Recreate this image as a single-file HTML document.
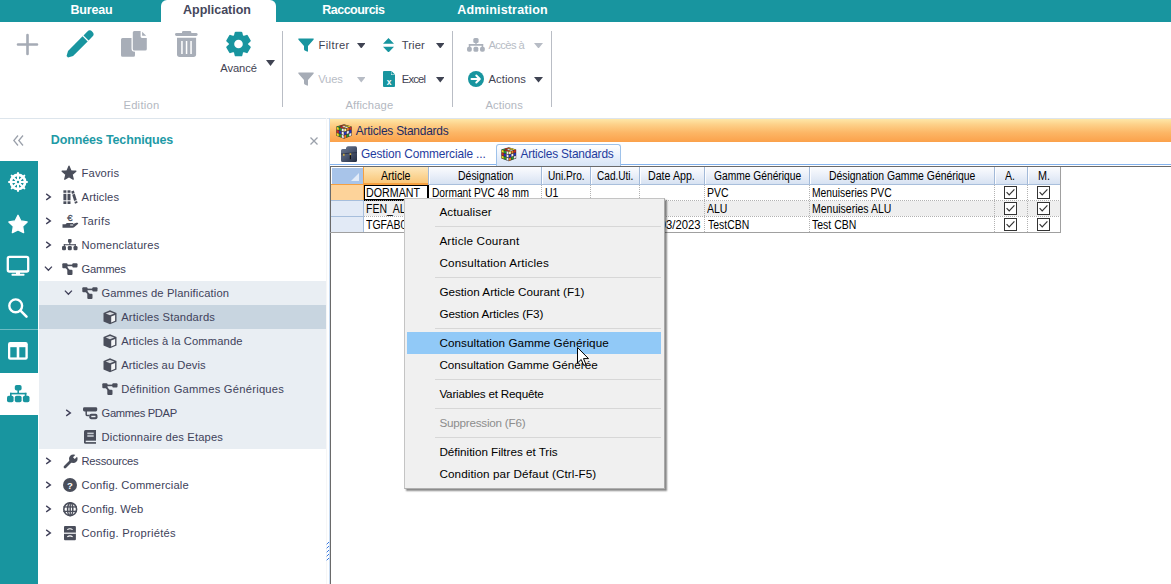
<!DOCTYPE html><html><head><meta charset="utf-8"><style>
html,body{margin:0;padding:0;width:1171px;height:584px;overflow:hidden;background:#fff;position:relative;font-family:"Liberation Sans", sans-serif}
</style></head><body>
<div style="position:absolute;left:0px;top:0px;width:1171px;height:22px;background:#18959f"></div>
<div style="position:absolute;left:161px;top:0px;width:115px;height:23px;background:#fff;border-radius:6px 6px 0 0"></div>
<div style="position:absolute;left:70.50px;top:0px;line-height:20px;font-size:12.5px;color:#fff;font-weight:bold;font-family:'Liberation Sans', sans-serif;white-space:nowrap;letter-spacing:-0.210px;">Bureau</div>
<div style="position:absolute;left:183.00px;top:0px;line-height:20px;font-size:12.5px;color:#45475c;font-weight:bold;font-family:'Liberation Sans', sans-serif;white-space:nowrap;letter-spacing:-0.005px;">Application</div>
<div style="position:absolute;left:322.30px;top:0px;line-height:20px;font-size:12.5px;color:#fff;font-weight:bold;font-family:'Liberation Sans', sans-serif;white-space:nowrap;letter-spacing:-0.522px;">Raccourcis</div>
<div style="position:absolute;left:457.30px;top:0px;line-height:20px;font-size:12.5px;color:#fff;font-weight:bold;font-family:'Liberation Sans', sans-serif;white-space:nowrap;letter-spacing:0.169px;">Administration</div>
<div style="position:absolute;left:0px;top:118px;width:1171px;height:1px;background:#dde5ec"></div>
<svg style="position:absolute;left:16px;top:33px" width="23" height="23" viewBox="0 0 23 23"><path d="M11.5 2 V21 M2 11.5 H21" stroke="#a5abb5" stroke-width="2.6" stroke-linecap="round" fill="none"/></svg>
<svg style="position:absolute;left:65.5px;top:29.5px" width="28" height="28" viewBox="0 0 28 28"><g transform="translate(1.3,26.7) rotate(-45)" fill="#18959f"><path d="M0 -1 Q0 0 0 1 L4.6 3.6 H25.2 V-3.6 H4.6 Z"/><path d="M26.5 -3.6 H32 Q35.4 -3.6 35.4 0 Q35.4 3.6 32 3.6 H26.5 Z"/></g></svg>
<svg style="position:absolute;left:120px;top:31px" width="28" height="26" viewBox="0 0 28 26"><g fill="#a8aeb8"><path d="M12.8 1.5 Q12.8 0 14.3 0 H20.6 V5.6 Q20.6 7 22 7 H26.8 V18 Q26.8 19.5 25.3 19.5 H14.3 Q12.8 19.5 12.8 18 Z"/><path d="M22.1 0.8 V4.7 H26.2 Z"/><path d="M1 8.4 Q1 6.9 2.5 6.9 H11.5 V17.5 Q11.5 20.8 14.8 20.8 H15 V24.3 Q15 25.8 13.5 25.8 H2.5 Q1 25.8 1 24.3 Z"/></g></svg>
<svg style="position:absolute;left:175px;top:31px" width="23" height="26" viewBox="0 0 23 26"><g fill="#a8aeb8"><rect x="7" y="0" width="9.3" height="3" rx="1.3"/><rect x="0" y="2" width="22.6" height="2.9" rx="1.45"/><path d="M2 6.8 H21.1 V23.3 Q21.1 25.9 18.5 25.9 H4.6 Q2 25.9 2 23.3 Z"/></g><g fill="#fff"><rect x="6.2" y="10" width="1.5" height="13"/><rect x="10.8" y="10" width="1.5" height="13"/><rect x="15.3" y="10" width="1.5" height="13"/></g></svg>
<svg style="position:absolute;left:226px;top:31px" width="25" height="26" viewBox="0 0 25 26"><path d="M8.91 5.18 L9.74 1.73 L15.26 1.73 L16.09 5.18 L17.48 5.99 L20.88 4.98 L23.64 9.75 L21.06 12.20 L21.06 13.80 L23.64 16.25 L20.88 21.02 L17.48 20.01 L16.09 20.82 L15.26 24.27 L9.74 24.27 L8.91 20.82 L7.52 20.01 L4.12 21.02 L1.36 16.25 L3.94 13.80 L3.94 12.20 L1.36 9.75 L4.12 4.98 L7.52 5.99 Z" fill="#18959f" stroke="#18959f" stroke-width="2.2" stroke-linejoin="round"/><circle cx="12.5" cy="13" r="4.3" fill="#fff"/></svg>
<div style="position:absolute;left:220.30px;top:58px;line-height:20px;font-size:11.2px;color:#3f4352;font-weight:normal;font-family:'Liberation Sans', sans-serif;white-space:nowrap;letter-spacing:-0.090px;">Avancé</div>
<svg style="position:absolute;left:265.5px;top:60px" width="9" height="6" viewBox="0 0 9 6"><path d="M0 0 H9 L4.5 6 Z" fill="#3f4352"/></svg>
<div style="position:absolute;left:282px;top:31px;width:1px;height:76px;background:#b9bdc5"></div>
<div style="position:absolute;left:123.40px;top:95px;line-height:20px;font-size:11.2px;color:#b3b8c1;font-weight:normal;font-family:'Liberation Sans', sans-serif;white-space:nowrap;letter-spacing:0.275px;">Edition</div>
<svg style="position:absolute;left:298px;top:38px" width="16" height="14" viewBox="0 0 16 14"><path d="M0.5 0.5 H15.5 Q16 1 15.5 1.8 L10 8 V13 Q10 14 9 13.6 L6.8 12.5 Q6 12 6 11 V8 L0.5 1.8 Q0 1 0.5 0.5 Z" fill="#18959f"/></svg>
<div style="position:absolute;left:318.50px;top:35px;line-height:20px;font-size:11.2px;color:#3f4352;font-weight:normal;font-family:'Liberation Sans', sans-serif;white-space:nowrap;letter-spacing:0.367px;">Filtrer</div>
<svg style="position:absolute;left:356.7px;top:42.7px" width="8.5" height="5.5" viewBox="0 0 8.5 5.5"><path d="M0 0 H8.5 L4.25 5.5 Z" fill="#3f4352"/></svg>
<svg style="position:absolute;left:383px;top:37.6px" width="11" height="14.5" viewBox="0 0 11 14.5"><path d="M5.5 0 L11 5.7 H0 Z M0 8.8 H11 L5.5 14.5 Z" fill="#18959f"/></svg>
<div style="position:absolute;left:401.70px;top:35px;line-height:20px;font-size:11.2px;color:#3f4352;font-weight:normal;font-family:'Liberation Sans', sans-serif;white-space:nowrap;letter-spacing:0.125px;">Trier</div>
<svg style="position:absolute;left:435.6px;top:42.7px" width="8.5" height="5.5" viewBox="0 0 8.5 5.5"><path d="M0 0 H8.5 L4.25 5.5 Z" fill="#3f4352"/></svg>
<svg style="position:absolute;left:298px;top:71.5px" width="16" height="14" viewBox="0 0 16 14"><path d="M0.5 0.5 H15.5 Q16 1 15.5 1.8 L10 8 V13 Q10 14 9 13.6 L6.8 12.5 Q6 12 6 11 V8 L0.5 1.8 Q0 1 0.5 0.5 Z" fill="#a6acb6"/></svg>
<div style="position:absolute;left:318.20px;top:69px;line-height:20px;font-size:11.2px;color:#b7bcc5;font-weight:normal;font-family:'Liberation Sans', sans-serif;white-space:nowrap;letter-spacing:-0.133px;">Vues</div>
<svg style="position:absolute;left:356.5px;top:77px" width="8.5" height="5.5" viewBox="0 0 8.5 5.5"><path d="M0 0 H8.5 L4.25 5.5 Z" fill="#b7bcc5"/></svg>
<svg style="position:absolute;left:383px;top:71px" width="12" height="16" viewBox="0 0 12 16"><path d="M1 0 H8 L12 4 V15 Q12 16 11 16 H1 Q0 16 0 15 V1 Q0 0 1 0 Z" fill="#18959f"/><path d="M8 0 V4 H12 Z" fill="#fff"/><path d="M8.4 0 L12 3.6 H8.4 Z" fill="#18959f"/><text x="6" y="14.2" font-size="8.5" font-family="Liberation Sans" font-weight="bold" fill="#fff" text-anchor="middle">x</text></svg>
<div style="position:absolute;left:401.70px;top:69px;line-height:20px;font-size:11.2px;color:#3f4352;font-weight:normal;font-family:'Liberation Sans', sans-serif;white-space:nowrap;letter-spacing:-0.750px;">Excel</div>
<svg style="position:absolute;left:435.6px;top:77px" width="8.5" height="5.5" viewBox="0 0 8.5 5.5"><path d="M0 0 H8.5 L4.25 5.5 Z" fill="#3f4352"/></svg>
<div style="position:absolute;left:452px;top:31px;width:1px;height:76px;background:#b9bdc5"></div>
<div style="position:absolute;left:345.50px;top:95px;line-height:20px;font-size:11.2px;color:#b3b8c1;font-weight:normal;font-family:'Liberation Sans', sans-serif;white-space:nowrap;letter-spacing:0.150px;">Affichage</div>
<svg style="position:absolute;left:467px;top:38px" width="18" height="14" viewBox="0 0 18 14"><g fill="#abb1bb"><rect x="6.3" y="0" width="5.3" height="4.9" rx="1.5"/><rect x="8.3" y="4" width="1.4" height="3"/><rect x="1.8" y="6" width="14.4" height="1.7" rx="0.8"/><rect x="1.8" y="6" width="1.5" height="3"/><rect x="14.7" y="6" width="1.5" height="3"/><rect x="0" y="8.8" width="4.8" height="4.9" rx="1.8"/><rect x="6.5" y="8.8" width="4.8" height="4.9" rx="1.5"/><rect x="13" y="8.8" width="4.8" height="4.9" rx="1.8"/></g></svg>
<div style="position:absolute;left:488.50px;top:35px;line-height:20px;font-size:11.2px;color:#b7bcc5;font-weight:normal;font-family:'Liberation Sans', sans-serif;white-space:nowrap;letter-spacing:-0.592px;">Accès à</div>
<svg style="position:absolute;left:534px;top:42.5px" width="9" height="5.5" viewBox="0 0 9 5.5"><path d="M0 0 H9 L4.5 5.5 Z" fill="#b7bcc5"/></svg>
<svg style="position:absolute;left:467.8px;top:71px" width="16" height="16" viewBox="0 0 16 16"><circle cx="8" cy="8" r="8" fill="#18959f"/><path d="M3.5 8 H11.5 M8.3 4.5 L11.8 8 L8.3 11.5" stroke="#fff" stroke-width="2" fill="none" stroke-linecap="round" stroke-linejoin="round"/></svg>
<div style="position:absolute;left:488.50px;top:69px;line-height:20px;font-size:11.2px;color:#3f4352;font-weight:normal;font-family:'Liberation Sans', sans-serif;white-space:nowrap;letter-spacing:0.108px;">Actions</div>
<svg style="position:absolute;left:534px;top:77px" width="9" height="5.5" viewBox="0 0 9 5.5"><path d="M0 0 H9 L4.5 5.5 Z" fill="#3f4352"/></svg>
<div style="position:absolute;left:551px;top:31px;width:1px;height:76px;background:#b9bdc5"></div>
<div style="position:absolute;left:485.40px;top:95px;line-height:20px;font-size:11.2px;color:#b3b8c1;font-weight:normal;font-family:'Liberation Sans', sans-serif;white-space:nowrap;letter-spacing:0.108px;">Actions</div>
<svg style="position:absolute;left:13px;top:135px" width="11" height="11" viewBox="0 0 11 11"><path d="M5 0.5 L0.8 5.5 L5 10.5 M10 0.5 L5.8 5.5 L10 10.5" stroke="#9ba1ab" stroke-width="1.3" fill="none"/></svg>
<div style="position:absolute;left:50.80px;top:130px;line-height:20px;font-size:12.5px;color:#1e9aa6;font-weight:bold;font-family:'Liberation Sans', sans-serif;white-space:nowrap;letter-spacing:-0.135px;">Données Techniques</div>
<svg style="position:absolute;left:310px;top:136.5px" width="8" height="8" viewBox="0 0 8 8"><path d="M0.5 0.5 L7.5 7.5 M7.5 0.5 L0.5 7.5" stroke="#9ba1ab" stroke-width="1.3"/></svg>
<div style="position:absolute;left:0px;top:161px;width:38px;height:423px;background:#18959f"></div>
<svg style="position:absolute;left:7.8px;top:171.7px" width="20" height="20" viewBox="0 0 20 20"><circle cx="10" cy="10" r="7.1" stroke="#fff" stroke-width="2.7" fill="none"/><line x1="11.50" y1="10.00" x2="19.00" y2="10.00" stroke="#fff" stroke-width="2" stroke-linecap="round"/><line x1="11.06" y1="11.06" x2="16.36" y2="16.36" stroke="#fff" stroke-width="2" stroke-linecap="round"/><line x1="10.00" y1="11.50" x2="10.00" y2="19.00" stroke="#fff" stroke-width="2" stroke-linecap="round"/><line x1="8.94" y1="11.06" x2="3.64" y2="16.36" stroke="#fff" stroke-width="2" stroke-linecap="round"/><line x1="8.50" y1="10.00" x2="1.00" y2="10.00" stroke="#fff" stroke-width="2" stroke-linecap="round"/><line x1="8.94" y1="8.94" x2="3.64" y2="3.64" stroke="#fff" stroke-width="2" stroke-linecap="round"/><line x1="10.00" y1="8.50" x2="10.00" y2="1.00" stroke="#fff" stroke-width="2" stroke-linecap="round"/><line x1="11.06" y1="8.94" x2="16.36" y2="3.64" stroke="#fff" stroke-width="2" stroke-linecap="round"/><circle cx="10" cy="10" r="2.9" fill="#fff"/><circle cx="10" cy="10" r="1.2" fill="#18959f"/></svg>
<svg style="position:absolute;left:7px;top:213px" width="22" height="22" viewBox="0 0 22 22"><polygon points="11.00,2.30 13.88,7.94 20.13,8.93 15.66,13.41 16.64,19.67 11.00,16.80 5.36,19.67 6.34,13.41 1.87,8.93 8.12,7.94" fill="#fff" stroke="#fff" stroke-width="1.3" stroke-linejoin="round"/></svg>
<svg style="position:absolute;left:6px;top:255px" width="24" height="22" viewBox="0 0 24 22"><rect x="1.8" y="1.9" width="20.4" height="14.6" rx="1.6" stroke="#fff" stroke-width="2.3" fill="none"/><rect x="10" y="16" width="4" height="3" fill="#fff"/><rect x="5.5" y="18.7" width="13" height="2" rx="0.6" fill="#fff"/></svg>
<svg style="position:absolute;left:7px;top:297px" width="22" height="22" viewBox="0 0 22 22"><circle cx="8.7" cy="8.8" r="6.4" stroke="#fff" stroke-width="2.4" fill="none"/><line x1="13.5" y1="13.6" x2="19.5" y2="19.6" stroke="#fff" stroke-width="2.6" stroke-linecap="round"/></svg>
<div style="position:absolute;left:0px;top:329px;width:38px;height:1px;background:#6cbcc3"></div>
<svg style="position:absolute;left:7.8px;top:341.7px" width="20" height="18" viewBox="0 0 20 18"><rect x="0" y="0" width="19.8" height="17.8" rx="2.2" fill="#fff"/><rect x="2.3" y="5.2" width="6.4" height="10.2" fill="#18959f"/><rect x="11.3" y="5.2" width="6.1" height="10.2" fill="#18959f"/></svg>
<div style="position:absolute;left:0px;top:373px;width:38px;height:42px;background:#fff"></div>
<svg style="position:absolute;left:6.5px;top:385px" width="23.00" height="18.00" viewBox="0 0 23 18"><g fill="#18959f"><rect x="7.8" y="0" width="6.8" height="5.6" rx="1.8"/><rect x="10.4" y="5" width="1.6" height="4"/><rect x="3" y="7.8" width="16.4" height="1.6"/><rect x="3" y="7.8" width="1.6" height="3.4"/><rect x="17.8" y="7.8" width="1.6" height="3.4"/><rect x="0" y="10.8" width="6.6" height="6.4" rx="1.8"/><rect x="7.8" y="10.8" width="6.8" height="6.4" rx="1.8"/><rect x="15.9" y="10.8" width="6.6" height="6.4" rx="1.8"/></g></svg>
<div style="position:absolute;left:326px;top:118px;width:1px;height:466px;background:#f6f6f6"></div>
<div style="position:absolute;left:39px;top:281px;width:287px;height:168px;background:#e9eef3"></div>
<div style="position:absolute;left:39px;top:305px;width:287px;height:24px;background:#c8d5e0"></div>
<svg style="position:absolute;left:61px;top:165px" width="16" height="16" viewBox="0 0 16 16"><polygon points="8.00,1.20 9.88,5.81 14.85,6.18 11.04,9.39 12.23,14.22 8.00,11.60 3.77,14.22 4.96,9.39 1.15,6.18 6.12,5.81" fill="#4a4e5b" stroke="#4a4e5b" stroke-width="1.3" stroke-linejoin="round"/></svg>
<div style="position:absolute;left:81.60px;top:163px;line-height:20px;font-size:11.2px;color:#40425a;font-weight:normal;font-family:'Liberation Sans', sans-serif;white-space:nowrap;letter-spacing:0.117px;">Favoris</div>
<svg style="position:absolute;left:44.8px;top:193.2px" width="7" height="8" viewBox="0 0 7 8"><path d="M1.2 0.9 L5.4 3.9 L1.2 6.9" stroke="#3f3f58" stroke-width="1.3" fill="none"/></svg>
<svg style="position:absolute;left:62.5px;top:189.5px" width="15" height="15" viewBox="0 0 15 15"><g fill="#4a4e5b"><rect x="0.4" y="0.3" width="3" height="13.7"/><rect x="4.5" y="0.3" width="3" height="13.7"/><path d="M8.2 1.6 L10.8 0.6 L14.6 12.8 L12 13.8 Z"/></g><g fill="#fff"><rect x="0" y="2.8" width="8" height="1"/><rect x="0" y="10.3" width="8" height="1"/><path d="M8.9 3.9 L11.6 2.9 L11.9 3.8 L9.2 4.8 Z"/><path d="M11 11 L13.7 10 L14 10.9 L11.3 11.9 Z"/></g></svg>
<div style="position:absolute;left:81.60px;top:187px;line-height:20px;font-size:11.2px;color:#40425a;font-weight:normal;font-family:'Liberation Sans', sans-serif;white-space:nowrap;letter-spacing:0.100px;">Articles</div>
<svg style="position:absolute;left:44.8px;top:217.2px" width="7" height="8" viewBox="0 0 7 8"><path d="M1.2 0.9 L5.4 3.9 L1.2 6.9" stroke="#3f3f58" stroke-width="1.3" fill="none"/></svg>
<svg style="position:absolute;left:62px;top:213px" width="17" height="15" viewBox="0 0 17 15"><text x="8" y="8" font-size="9.6" font-family="Liberation Sans" fill="#4a4e5b" text-anchor="middle" stroke="#4a4e5b" stroke-width="0.3">€</text><path d="M0.5 11.2 L3.5 11.2 L4.8 9.9 L11.2 9.9 L11.2 11.1 L14.3 9.8 Q16.4 9.2 16.2 10.8 L12.4 14 Q11.8 14.7 10.5 14.7 L0.5 14.7 Z" fill="#4a4e5b"/><rect x="8.2" y="11.4" width="3" height="1.2" fill="#d0d3da"/></svg>
<div style="position:absolute;left:81.60px;top:211px;line-height:20px;font-size:11.2px;color:#40425a;font-weight:normal;font-family:'Liberation Sans', sans-serif;white-space:nowrap;letter-spacing:0.330px;">Tarifs</div>
<svg style="position:absolute;left:44.8px;top:241.2px" width="7" height="8" viewBox="0 0 7 8"><path d="M1.2 0.9 L5.4 3.9 L1.2 6.9" stroke="#3f3f58" stroke-width="1.3" fill="none"/></svg>
<svg style="position:absolute;left:61.5px;top:239.3px" width="16" height="12" viewBox="0 0 16 12"><g fill="#4a4e5b"><rect x="6" y="0" width="3.6" height="3.8" rx="1"/><rect x="7.2" y="3" width="1.2" height="3"/><rect x="1.8" y="5.2" width="12" height="1.1"/><rect x="1.8" y="5.2" width="1.1" height="2.5"/><rect x="12.7" y="5.2" width="1.1" height="2.5"/><rect x="0" y="7" width="4" height="4.2" rx="1.3"/><rect x="5.8" y="7" width="4" height="4.2" rx="1.3"/><rect x="11.5" y="7" width="4" height="4.2" rx="1.3"/></g></svg>
<div style="position:absolute;left:81.40px;top:235px;line-height:20px;font-size:11.2px;color:#40425a;font-weight:normal;font-family:'Liberation Sans', sans-serif;white-space:nowrap;letter-spacing:0.225px;">Nomenclatures</div>
<svg style="position:absolute;left:44.3px;top:265.8px" width="9" height="6" viewBox="0 0 9 6"><path d="M0.9 0.6 L4.4 4.3 L7.9 0.6" stroke="#3f3f58" stroke-width="1.3" fill="none"/></svg>
<svg style="position:absolute;left:61.6px;top:262.9px" width="16" height="13" viewBox="0 0 16 13"><g fill="#4a4e5b"><rect x="0.3" y="0.3" width="5.2" height="5" rx="1"/><rect x="10.3" y="0.3" width="5.2" height="4.2" rx="1"/><rect x="5.3" y="6.8" width="5.2" height="5.2" rx="1"/><rect x="4" y="1.6" width="7.5" height="1.6"/><path d="M2.5 3.5 L4 2.5 L8.8 8.5 L7.3 9.5 Z"/></g></svg>
<div style="position:absolute;left:81.60px;top:259px;line-height:20px;font-size:11.2px;color:#40425a;font-weight:normal;font-family:'Liberation Sans', sans-serif;white-space:nowrap;letter-spacing:-0.230px;">Gammes</div>
<svg style="position:absolute;left:64.3px;top:289.8px" width="9" height="6" viewBox="0 0 9 6"><path d="M0.9 0.6 L4.4 4.3 L7.9 0.6" stroke="#3f3f58" stroke-width="1.3" fill="none"/></svg>
<svg style="position:absolute;left:81.8px;top:286.9px" width="16" height="13" viewBox="0 0 16 13"><g fill="#4a4e5b"><rect x="0.3" y="0.3" width="5.2" height="5" rx="1"/><rect x="10.3" y="0.3" width="5.2" height="4.2" rx="1"/><rect x="5.3" y="6.8" width="5.2" height="5.2" rx="1"/><rect x="4" y="1.6" width="7.5" height="1.6"/><path d="M2.5 3.5 L4 2.5 L8.8 8.5 L7.3 9.5 Z"/></g></svg>
<div style="position:absolute;left:101.40px;top:283px;line-height:20px;font-size:11.2px;color:#40425a;font-weight:normal;font-family:'Liberation Sans', sans-serif;white-space:nowrap;letter-spacing:0.150px;">Gammes de Planification</div>
<svg style="position:absolute;left:102.8px;top:309.8px" width="14" height="15" viewBox="0 0 14 15"><path d="M7 0.3 L13.5 2.9 V11.5 L7 14.3 L0.5 11.5 V2.9 Z" fill="#4a4e5b"/><path d="M7 1.9 L11.3 3.6 L7 5.3 L2.7 3.6 Z" fill="#e8ebef" opacity="0.9"/><path d="M8.2 6.6 L12.1 5 V10.8 L8.2 12.5 Z" fill="#f4f5f7"/></svg>
<div style="position:absolute;left:121.20px;top:307px;line-height:20px;font-size:11.2px;color:#40425a;font-weight:normal;font-family:'Liberation Sans', sans-serif;white-space:nowrap;letter-spacing:0.171px;">Articles Standards</div>
<svg style="position:absolute;left:102.8px;top:333.8px" width="14" height="15" viewBox="0 0 14 15"><path d="M7 0.3 L13.5 2.9 V11.5 L7 14.3 L0.5 11.5 V2.9 Z" fill="#4a4e5b"/><path d="M7 1.9 L11.3 3.6 L7 5.3 L2.7 3.6 Z" fill="#e8ebef" opacity="0.9"/><path d="M8.2 6.6 L12.1 5 V10.8 L8.2 12.5 Z" fill="#f4f5f7"/></svg>
<div style="position:absolute;left:121.20px;top:331px;line-height:20px;font-size:11.2px;color:#40425a;font-weight:normal;font-family:'Liberation Sans', sans-serif;white-space:nowrap;letter-spacing:0.119px;">Articles à la Commande</div>
<svg style="position:absolute;left:102.8px;top:357.8px" width="14" height="15" viewBox="0 0 14 15"><path d="M7 0.3 L13.5 2.9 V11.5 L7 14.3 L0.5 11.5 V2.9 Z" fill="#4a4e5b"/><path d="M7 1.9 L11.3 3.6 L7 5.3 L2.7 3.6 Z" fill="#e8ebef" opacity="0.9"/><path d="M8.2 6.6 L12.1 5 V10.8 L8.2 12.5 Z" fill="#f4f5f7"/></svg>
<div style="position:absolute;left:121.20px;top:355px;line-height:20px;font-size:11.2px;color:#40425a;font-weight:normal;font-family:'Liberation Sans', sans-serif;white-space:nowrap;letter-spacing:0.069px;">Articles au Devis</div>
<svg style="position:absolute;left:101.8px;top:382.6px" width="16" height="13" viewBox="0 0 16 13"><g fill="#4a4e5b"><rect x="0.3" y="0.3" width="5.2" height="5" rx="1"/><rect x="10.3" y="0.3" width="5.2" height="4.2" rx="1"/><rect x="5.3" y="6.8" width="5.2" height="5.2" rx="1"/><rect x="4" y="1.6" width="7.5" height="1.6"/><path d="M2.5 3.5 L4 2.5 L8.8 8.5 L7.3 9.5 Z"/></g></svg>
<div style="position:absolute;left:121.20px;top:379px;line-height:20px;font-size:11.2px;color:#40425a;font-weight:normal;font-family:'Liberation Sans', sans-serif;white-space:nowrap;letter-spacing:0.246px;">Définition Gammes Génériques</div>
<svg style="position:absolute;left:64.8px;top:409.2px" width="7" height="8" viewBox="0 0 7 8"><path d="M1.2 0.9 L5.4 3.9 L1.2 6.9" stroke="#3f3f58" stroke-width="1.3" fill="none"/></svg>
<svg style="position:absolute;left:82.8px;top:407px" width="15" height="13" viewBox="0 0 15 13"><rect x="0" y="0.2" width="14.2" height="4.2" rx="1.4" fill="#4a4e5b"/><path d="M3.2 4 V7.5 Q3.2 8.6 4.5 8.6 H6.5" stroke="#4a4e5b" stroke-width="1.5" fill="none"/><rect x="6.3" y="6.8" width="8.2" height="5.4" rx="2" fill="#4a4e5b"/><rect x="8.3" y="8.8" width="4.2" height="1.4" fill="#e9eef3"/></svg>
<div style="position:absolute;left:101.60px;top:403px;line-height:20px;font-size:11.2px;color:#40425a;font-weight:normal;font-family:'Liberation Sans', sans-serif;white-space:nowrap;letter-spacing:-0.335px;">Gammes PDAP</div>
<svg style="position:absolute;left:84px;top:430px" width="13" height="14" viewBox="0 0 13 14"><path d="M1.5 0 H12 V13.8 H1.5 Q0 13.8 0 12.3 V1.5 Q0 0 1.5 0 Z" fill="#4a4e5b"/><rect x="3.3" y="2.6" width="6.4" height="1.6" fill="#c7ccd3"/><rect x="3.3" y="5.2" width="6.4" height="1.6" fill="#c7ccd3"/><rect x="1.7" y="10.7" width="10.3" height="1.4" fill="#e9eef3"/></svg>
<div style="position:absolute;left:101.60px;top:427px;line-height:20px;font-size:11.2px;color:#40425a;font-weight:normal;font-family:'Liberation Sans', sans-serif;white-space:nowrap;letter-spacing:0.141px;">Dictionnaire des Etapes</div>
<svg style="position:absolute;left:44.8px;top:457.2px" width="7" height="8" viewBox="0 0 7 8"><path d="M1.2 0.9 L5.4 3.9 L1.2 6.9" stroke="#3f3f58" stroke-width="1.3" fill="none"/></svg>
<svg style="position:absolute;left:62.6px;top:454px" width="15" height="15" viewBox="0 0 15 15"><line x1="2" y1="13" x2="9" y2="6" stroke="#4a4e5b" stroke-width="2.8" stroke-linecap="round"/><circle cx="10.3" cy="4.7" r="4.3" fill="#4a4e5b"/><line x1="10.9" y1="4.1" x2="16" y2="-1" stroke="#fff" stroke-width="2.5"/></svg>
<div style="position:absolute;left:81.50px;top:451px;line-height:20px;font-size:11.2px;color:#40425a;font-weight:normal;font-family:'Liberation Sans', sans-serif;white-space:nowrap;letter-spacing:-0.217px;">Ressources</div>
<svg style="position:absolute;left:44.8px;top:481.2px" width="7" height="8" viewBox="0 0 7 8"><path d="M1.2 0.9 L5.4 3.9 L1.2 6.9" stroke="#3f3f58" stroke-width="1.3" fill="none"/></svg>
<svg style="position:absolute;left:62.7px;top:477.8px" width="14" height="14" viewBox="0 0 14 14"><circle cx="7" cy="7" r="7" fill="#4a4e5b"/><text x="7" y="11" font-size="9.5" font-family="Liberation Sans" font-weight="bold" fill="#fff" text-anchor="middle">?</text></svg>
<div style="position:absolute;left:81.50px;top:475px;line-height:20px;font-size:11.2px;color:#40425a;font-weight:normal;font-family:'Liberation Sans', sans-serif;white-space:nowrap;letter-spacing:0.153px;">Config. Commerciale</div>
<svg style="position:absolute;left:44.8px;top:505.2px" width="7" height="8" viewBox="0 0 7 8"><path d="M1.2 0.9 L5.4 3.9 L1.2 6.9" stroke="#3f3f58" stroke-width="1.3" fill="none"/></svg>
<svg style="position:absolute;left:62.7px;top:501.7px" width="15" height="15" viewBox="0 0 15 15"><circle cx="7.2" cy="7.2" r="6.4" stroke="#4a4e5b" stroke-width="1.6" fill="none"/><ellipse cx="7.2" cy="7.2" rx="2.6" ry="6.4" stroke="#4a4e5b" stroke-width="1.5" fill="none"/><rect x="0.4" y="4.3" width="13.6" height="1.3" fill="#4a4e5b"/><rect x="0.4" y="8.7" width="13.6" height="1.3" fill="#4a4e5b"/><rect x="6.5" y="0.5" width="1.4" height="13.4" fill="#4a4e5b"/><path d="M1.6 4.3 Q4 0.8 7.2 0.8 Q10.4 0.8 12.8 4.3 Z M1.6 10 Q4 13.6 7.2 13.6 Q10.4 13.6 12.8 10 Z" fill="none"/></svg>
<div style="position:absolute;left:81.50px;top:499px;line-height:20px;font-size:11.2px;color:#40425a;font-weight:normal;font-family:'Liberation Sans', sans-serif;white-space:nowrap;letter-spacing:0.035px;">Config. Web</div>
<svg style="position:absolute;left:44.8px;top:529.2px" width="7" height="8" viewBox="0 0 7 8"><path d="M1.2 0.9 L5.4 3.9 L1.2 6.9" stroke="#3f3f58" stroke-width="1.3" fill="none"/></svg>
<svg style="position:absolute;left:64px;top:525.6px" width="12" height="15" viewBox="0 0 12 15"><rect x="0" y="0" width="11.9" height="14.3" rx="1" fill="#4a4e5b"/><rect x="0" y="6.6" width="11.9" height="1.2" fill="#fff"/><path d="M3.3 3.6 Q6 1.8 8.6 3.6" stroke="#fff" stroke-width="1.1" fill="none"/><path d="M3.3 10.8 Q6 9 8.6 10.8" stroke="#fff" stroke-width="1.1" fill="none"/></svg>
<div style="position:absolute;left:81.50px;top:523px;line-height:20px;font-size:11.2px;color:#40425a;font-weight:normal;font-family:'Liberation Sans', sans-serif;white-space:nowrap;letter-spacing:0.274px;">Config. Propriétés</div>
<div style="position:absolute;left:329px;top:118px;width:1px;height:466px;background:#c9dcf2"></div>
<div style="position:absolute;left:330px;top:119px;width:841px;height:23px;background:linear-gradient(#fee7a8 0%,#fdd088 25%,#fcb665 60%,#fba14b 100%)"></div>
<svg style="position:absolute;left:336.2px;top:124px" width="16" height="15" viewBox="0 0 16 15"><path d="M8 0.3 L15.7 2.6 V11.8 L8 14.8 L0.3 11.8 V2.6 Z" fill="#3a3030"/><path d="M0.75 3.06 L2.75 3.61 L2.75 6.06 L0.75 5.45 Z" fill="#f2e21a"/><path d="M0.75 6.04 L2.75 6.67 L2.75 9.13 L0.75 8.42 Z" fill="#d02a24"/><path d="M0.75 9.02 L2.75 9.74 L2.75 12.19 L0.75 11.40 Z" fill="#f2e21a"/><path d="M3.25 3.74 L5.25 4.28 L5.25 6.83 L3.25 6.21 Z" fill="#22a030"/><path d="M3.25 6.83 L5.25 7.46 L5.25 10.00 L3.25 9.30 Z" fill="#2233c8"/><path d="M3.25 9.92 L5.25 10.64 L5.25 13.18 L3.25 12.39 Z" fill="#22a030"/><path d="M5.75 4.42 L7.75 4.96 L7.75 7.59 L5.75 6.98 Z" fill="#f0f0f4"/><path d="M5.75 7.62 L7.75 8.25 L7.75 10.88 L5.75 10.18 Z" fill="#f0f0f4"/><path d="M5.75 10.82 L7.75 11.54 L7.75 14.17 L5.75 13.38 Z" fill="#f0f0f4"/><path d="M8.25 4.96 L10.25 4.42 L10.25 6.98 L8.25 7.59 Z" fill="#f6f290"/><path d="M8.25 8.25 L10.25 7.62 L10.25 10.18 L8.25 10.88 Z" fill="#2233c8"/><path d="M8.25 11.54 L10.25 10.82 L10.25 13.38 L8.25 14.17 Z" fill="#f07a1a"/><path d="M10.75 4.28 L12.75 3.74 L12.75 6.21 L10.75 6.83 Z" fill="#f07a1a"/><path d="M10.75 7.46 L12.75 6.83 L12.75 9.30 L10.75 10.00 Z" fill="#f0f0f4"/><path d="M10.75 10.64 L12.75 9.92 L12.75 12.39 L10.75 13.18 Z" fill="#22a030"/><path d="M13.25 3.61 L15.25 3.06 L15.25 5.45 L13.25 6.06 Z" fill="#d02a24"/><path d="M13.25 6.67 L15.25 6.04 L15.25 8.42 L13.25 9.13 Z" fill="#2233c8"/><path d="M13.25 9.74 L15.25 9.02 L15.25 11.40 L13.25 12.19 Z" fill="#f0f0f4"/><path d="M1.00 2.69 L3.00 2.11 L5.00 2.66 L3.00 3.23 Z" fill="#22a030"/><path d="M3.50 3.36 L5.50 2.80 L7.50 3.34 L5.50 3.90 Z" fill="#d02a24"/><path d="M6.00 4.03 L8.00 3.48 L10.00 4.03 L8.00 4.57 Z" fill="#f07a1a"/><path d="M3.50 1.96 L5.50 1.38 L7.50 1.94 L5.50 2.52 Z" fill="#d02a24"/><path d="M6.00 2.65 L8.00 2.09 L10.00 2.65 L8.00 3.21 Z" fill="#f0f0f4"/><path d="M8.50 3.34 L10.50 2.80 L12.50 3.36 L10.50 3.90 Z" fill="#f0f0f4"/><path d="M6.00 1.23 L8.00 0.65 L10.00 1.23 L8.00 1.80 Z" fill="#f07a1a"/><path d="M8.50 1.94 L10.50 1.38 L12.50 1.96 L10.50 2.52 Z" fill="#f2e21a"/><path d="M11.00 2.66 L13.00 2.11 L15.00 2.69 L13.00 3.23 Z" fill="#f2e21a"/></svg>
<div style="position:absolute;left:355.80px;top:121px;line-height:20px;font-size:11.9px;color:#1c2b63;font-weight:normal;font-family:'Liberation Sans', sans-serif;white-space:nowrap;letter-spacing:-0.215px;">Articles Standards</div>
<div style="position:absolute;left:330px;top:164px;width:841px;height:1px;background:#86b4ee"></div>
<svg style="position:absolute;left:340.8px;top:145.8px" width="17" height="17" viewBox="0 0 17 17"><defs><linearGradient id="bc" x1="0" y1="0" x2="1" y2="1"><stop offset="0" stop-color="#6b7890"/><stop offset="0.5" stop-color="#4a5670"/><stop offset="1" stop-color="#222c40"/></linearGradient></defs><path d="M5 2 Q5.5 0.3 7 0.3 H14.5 Q16 0.3 16 2 V14.5 Q16 16 14.5 16 H1.5 Q0 16 0 14.5 V4.5 Q0 3 1.5 3 H5 Z" fill="url(#bc)"/><path d="M0 8 L16 6.5" stroke="#1c2436" stroke-width="0.6"/><rect x="2" y="7.8" width="1.6" height="2" fill="#c8a640"/><rect x="8.6" y="7.2" width="1.6" height="2" fill="#c8a640"/><rect x="8.8" y="9.2" width="1.2" height="4" fill="#111"/></svg>
<div style="position:absolute;left:360.90px;top:144px;line-height:20px;font-size:11.9px;color:#1f3c9e;font-weight:normal;font-family:'Liberation Sans', sans-serif;white-space:nowrap;letter-spacing:-0.120px;">Gestion Commerciale ...</div>
<div style="position:absolute;left:496px;top:144px;width:123px;height:21px;border:1px solid #9ec2ea;border-bottom:none;border-radius:3px 3px 0 0;background:linear-gradient(#ffffff,#e6eefa 60%,#d8e5f6)"></div>
<svg style="position:absolute;left:501.4px;top:147.2px" width="15.5" height="14.5" viewBox="0 0 16 15"><path d="M8 0.3 L15.7 2.6 V11.8 L8 14.8 L0.3 11.8 V2.6 Z" fill="#3a3030"/><path d="M0.75 3.06 L2.75 3.61 L2.75 6.06 L0.75 5.45 Z" fill="#f2e21a"/><path d="M0.75 6.04 L2.75 6.67 L2.75 9.13 L0.75 8.42 Z" fill="#d02a24"/><path d="M0.75 9.02 L2.75 9.74 L2.75 12.19 L0.75 11.40 Z" fill="#f2e21a"/><path d="M3.25 3.74 L5.25 4.28 L5.25 6.83 L3.25 6.21 Z" fill="#22a030"/><path d="M3.25 6.83 L5.25 7.46 L5.25 10.00 L3.25 9.30 Z" fill="#2233c8"/><path d="M3.25 9.92 L5.25 10.64 L5.25 13.18 L3.25 12.39 Z" fill="#22a030"/><path d="M5.75 4.42 L7.75 4.96 L7.75 7.59 L5.75 6.98 Z" fill="#f0f0f4"/><path d="M5.75 7.62 L7.75 8.25 L7.75 10.88 L5.75 10.18 Z" fill="#f0f0f4"/><path d="M5.75 10.82 L7.75 11.54 L7.75 14.17 L5.75 13.38 Z" fill="#f0f0f4"/><path d="M8.25 4.96 L10.25 4.42 L10.25 6.98 L8.25 7.59 Z" fill="#f6f290"/><path d="M8.25 8.25 L10.25 7.62 L10.25 10.18 L8.25 10.88 Z" fill="#2233c8"/><path d="M8.25 11.54 L10.25 10.82 L10.25 13.38 L8.25 14.17 Z" fill="#f07a1a"/><path d="M10.75 4.28 L12.75 3.74 L12.75 6.21 L10.75 6.83 Z" fill="#f07a1a"/><path d="M10.75 7.46 L12.75 6.83 L12.75 9.30 L10.75 10.00 Z" fill="#f0f0f4"/><path d="M10.75 10.64 L12.75 9.92 L12.75 12.39 L10.75 13.18 Z" fill="#22a030"/><path d="M13.25 3.61 L15.25 3.06 L15.25 5.45 L13.25 6.06 Z" fill="#d02a24"/><path d="M13.25 6.67 L15.25 6.04 L15.25 8.42 L13.25 9.13 Z" fill="#2233c8"/><path d="M13.25 9.74 L15.25 9.02 L15.25 11.40 L13.25 12.19 Z" fill="#f0f0f4"/><path d="M1.00 2.69 L3.00 2.11 L5.00 2.66 L3.00 3.23 Z" fill="#22a030"/><path d="M3.50 3.36 L5.50 2.80 L7.50 3.34 L5.50 3.90 Z" fill="#d02a24"/><path d="M6.00 4.03 L8.00 3.48 L10.00 4.03 L8.00 4.57 Z" fill="#f07a1a"/><path d="M3.50 1.96 L5.50 1.38 L7.50 1.94 L5.50 2.52 Z" fill="#d02a24"/><path d="M6.00 2.65 L8.00 2.09 L10.00 2.65 L8.00 3.21 Z" fill="#f0f0f4"/><path d="M8.50 3.34 L10.50 2.80 L12.50 3.36 L10.50 3.90 Z" fill="#f0f0f4"/><path d="M6.00 1.23 L8.00 0.65 L10.00 1.23 L8.00 1.80 Z" fill="#f07a1a"/><path d="M8.50 1.94 L10.50 1.38 L12.50 1.96 L10.50 2.52 Z" fill="#f2e21a"/><path d="M11.00 2.66 L13.00 2.11 L15.00 2.69 L13.00 3.23 Z" fill="#f2e21a"/></svg>
<div style="position:absolute;left:520.50px;top:144px;line-height:20px;font-size:11.9px;color:#1f3c9e;font-weight:normal;font-family:'Liberation Sans', sans-serif;white-space:nowrap;letter-spacing:-0.191px;">Articles Standards</div>
<div style="position:absolute;left:330px;top:166px;width:841px;height:1px;background:#6a6a6a"></div>
<div style="position:absolute;left:330px;top:166px;width:1px;height:418px;background:#6a6a6a"></div>
<div style="position:absolute;left:331px;top:167px;width:729px;height:17px;background:linear-gradient(#fbfcfe,#e8eef8 55%,#d7e2f2)"></div>
<div style="position:absolute;left:331px;top:184px;width:729px;height:1px;background:#a9bfdc"></div>
<div style="position:absolute;left:331px;top:167px;width:32px;height:17px;background:#a8c4e9;border-top:1px solid #fff;border-left:1px solid #fff;box-sizing:border-box"></div>
<svg style="position:absolute;left:350px;top:172px" width="11" height="11" viewBox="0 0 11 11"><path d="M9 1 V9 H1 Z" fill="#e2ebf8"/></svg>
<div style="position:absolute;left:363px;top:167px;width:65px;height:18px;background:linear-gradient(#fde8bd,#fbd595 50%,#f8c271)"></div>
<div style="position:absolute;left:363px;top:183px;width:65px;height:2px;background:#f5a041"></div>
<div style="position:absolute;left:428px;top:167px;width:1px;height:17px;background:#a2b9d8"></div>
<div style="position:absolute;left:429px;top:167px;width:1px;height:17px;background:#fdfdff"></div>
<div style="position:absolute;left:541px;top:167px;width:1px;height:17px;background:#a2b9d8"></div>
<div style="position:absolute;left:542px;top:167px;width:1px;height:17px;background:#fdfdff"></div>
<div style="position:absolute;left:590px;top:167px;width:1px;height:17px;background:#a2b9d8"></div>
<div style="position:absolute;left:591px;top:167px;width:1px;height:17px;background:#fdfdff"></div>
<div style="position:absolute;left:639px;top:167px;width:1px;height:17px;background:#a2b9d8"></div>
<div style="position:absolute;left:640px;top:167px;width:1px;height:17px;background:#fdfdff"></div>
<div style="position:absolute;left:704px;top:167px;width:1px;height:17px;background:#a2b9d8"></div>
<div style="position:absolute;left:705px;top:167px;width:1px;height:17px;background:#fdfdff"></div>
<div style="position:absolute;left:809px;top:167px;width:1px;height:17px;background:#a2b9d8"></div>
<div style="position:absolute;left:810px;top:167px;width:1px;height:17px;background:#fdfdff"></div>
<div style="position:absolute;left:994px;top:167px;width:1px;height:17px;background:#a2b9d8"></div>
<div style="position:absolute;left:995px;top:167px;width:1px;height:17px;background:#fdfdff"></div>
<div style="position:absolute;left:1027px;top:167px;width:1px;height:17px;background:#a2b9d8"></div>
<div style="position:absolute;left:1028px;top:167px;width:1px;height:17px;background:#fdfdff"></div>
<div style="position:absolute;left:1060px;top:167px;width:1px;height:17px;background:#a2b9d8"></div>
<div style="position:absolute;left:1061px;top:167px;width:1px;height:17px;background:#fdfdff"></div>
<div style="position:absolute;left:380.70px;top:166px;line-height:20px;font-size:12px;color:#000;font-weight:normal;font-family:'Liberation Sans', sans-serif;white-space:nowrap;letter-spacing:0.000px;transform:scaleX(0.8846);transform-origin:0.00px 0;">Article</div>
<div style="position:absolute;left:457.90px;top:166px;line-height:20px;font-size:12px;color:#000;font-weight:normal;font-family:'Liberation Sans', sans-serif;white-space:nowrap;letter-spacing:0.000px;transform:scaleX(0.8722);transform-origin:0.00px 0;">Désignation</div>
<div style="position:absolute;left:547.70px;top:166px;line-height:20px;font-size:12px;color:#000;font-weight:normal;font-family:'Liberation Sans', sans-serif;white-space:nowrap;letter-spacing:0.000px;transform:scaleX(0.8443);transform-origin:0.00px 0;">Uni.Pro.</div>
<div style="position:absolute;left:596.60px;top:166px;line-height:20px;font-size:12px;color:#000;font-weight:normal;font-family:'Liberation Sans', sans-serif;white-space:nowrap;letter-spacing:0.000px;transform:scaleX(0.8397);transform-origin:0.00px 0;">Cad.Uti.</div>
<div style="position:absolute;left:648.40px;top:166px;line-height:20px;font-size:12px;color:#000;font-weight:normal;font-family:'Liberation Sans', sans-serif;white-space:nowrap;letter-spacing:0.000px;transform:scaleX(0.8880);transform-origin:0.00px 0;">Date App.</div>
<div style="position:absolute;left:713.70px;top:166px;line-height:20px;font-size:12px;color:#000;font-weight:normal;font-family:'Liberation Sans', sans-serif;white-space:nowrap;letter-spacing:0.000px;transform:scaleX(0.8535);transform-origin:0.00px 0;">Gamme Générique</div>
<div style="position:absolute;left:828.70px;top:166px;line-height:20px;font-size:12px;color:#000;font-weight:normal;font-family:'Liberation Sans', sans-serif;white-space:nowrap;letter-spacing:0.000px;transform:scaleX(0.8676);transform-origin:0.00px 0;">Désignation Gamme Générique</div>
<div style="position:absolute;left:1005.30px;top:166px;line-height:20px;font-size:12px;color:#000;font-weight:normal;font-family:'Liberation Sans', sans-serif;white-space:nowrap;letter-spacing:0.000px;transform:scaleX(0.8811);transform-origin:0.00px 0;">A.</div>
<div style="position:absolute;left:1038.00px;top:166px;line-height:20px;font-size:12px;color:#000;font-weight:normal;font-family:'Liberation Sans', sans-serif;white-space:nowrap;letter-spacing:0.000px;transform:scaleX(0.8989);transform-origin:0.00px 0;">M.</div>
<div style="position:absolute;left:331px;top:185px;width:32px;height:15px;background:#fdd39a"></div>
<div style="position:absolute;left:331px;top:200px;width:32px;height:1px;background:#a6bedc"></div>
<div style="position:absolute;left:331px;top:201px;width:32px;height:15px;background:#e2eaf6"></div>
<div style="position:absolute;left:331px;top:216px;width:32px;height:1px;background:#a6bedc"></div>
<div style="position:absolute;left:331px;top:217px;width:32px;height:15px;background:#e2eaf6"></div>
<div style="position:absolute;left:363px;top:184px;width:1px;height:48px;background:#a6bedc"></div>
<div style="position:absolute;left:331px;top:184px;width:32px;height:1px;background:#f5a041"></div>
<div style="position:absolute;left:363px;top:167px;width:1px;height:33px;background:#f5a041"></div>
<div style="position:absolute;left:364px;top:201px;width:696px;height:15px;background:#efefef"></div>
<div style="position:absolute;left:364px;top:200px;width:696px;height:1px;background:repeating-linear-gradient(90deg,#b2b2b2 0 1px,transparent 1px 2px)"></div>
<div style="position:absolute;left:364px;top:216px;width:696px;height:1px;background:repeating-linear-gradient(90deg,#b2b2b2 0 1px,transparent 1px 2px)"></div>
<div style="position:absolute;left:541px;top:185px;width:1px;height:47px;background:repeating-linear-gradient(#b2b2b2 0 1px,transparent 1px 2px)"></div>
<div style="position:absolute;left:590px;top:185px;width:1px;height:47px;background:repeating-linear-gradient(#b2b2b2 0 1px,transparent 1px 2px)"></div>
<div style="position:absolute;left:639px;top:185px;width:1px;height:47px;background:repeating-linear-gradient(#b2b2b2 0 1px,transparent 1px 2px)"></div>
<div style="position:absolute;left:704px;top:185px;width:1px;height:47px;background:repeating-linear-gradient(#b2b2b2 0 1px,transparent 1px 2px)"></div>
<div style="position:absolute;left:809px;top:185px;width:1px;height:47px;background:repeating-linear-gradient(#b2b2b2 0 1px,transparent 1px 2px)"></div>
<div style="position:absolute;left:994px;top:185px;width:1px;height:47px;background:repeating-linear-gradient(#b2b2b2 0 1px,transparent 1px 2px)"></div>
<div style="position:absolute;left:1027px;top:185px;width:1px;height:47px;background:repeating-linear-gradient(#b2b2b2 0 1px,transparent 1px 2px)"></div>
<div style="position:absolute;left:330px;top:232px;width:731px;height:1px;background:#a0a0a0"></div>
<div style="position:absolute;left:1060px;top:167px;width:1px;height:66px;background:#a0a0a0"></div>
<div style="position:absolute;left:364px;top:185px;width:62px;height:13px;border:1px solid #000"></div>
<div style="position:absolute;left:427px;top:185px;width:2px;height:15px;background:#000"></div>
<div style="position:absolute;left:364px;top:199.5px;width:63px;height:1.5px;background:repeating-linear-gradient(90deg,#000 0 1px,#888 1px 2px)"></div>
<div style="position:absolute;left:366.40px;top:183px;line-height:20px;font-size:12px;color:#000;font-weight:normal;font-family:'Liberation Sans', sans-serif;white-space:nowrap;letter-spacing:0.000px;transform:scaleX(0.8904);transform-origin:0.00px 0;">DORMANT</div>
<div style="position:absolute;left:431.90px;top:183px;line-height:20px;font-size:12px;color:#000;font-weight:normal;font-family:'Liberation Sans', sans-serif;white-space:nowrap;letter-spacing:0.000px;transform:scaleX(0.8505);transform-origin:0.00px 0;">Dormant PVC 48 mm</div>
<div style="position:absolute;left:544.80px;top:183px;line-height:20px;font-size:12px;color:#000;font-weight:normal;font-family:'Liberation Sans', sans-serif;white-space:nowrap;letter-spacing:0.000px;transform:scaleX(0.8750);transform-origin:0.00px 0;">U1</div>
<div style="position:absolute;left:707.20px;top:183px;line-height:20px;font-size:12px;color:#000;font-weight:normal;font-family:'Liberation Sans', sans-serif;white-space:nowrap;letter-spacing:0.000px;transform:scaleX(0.8750);transform-origin:0.00px 0;">PVC</div>
<div style="position:absolute;left:812.40px;top:183px;line-height:20px;font-size:12px;color:#000;font-weight:normal;font-family:'Liberation Sans', sans-serif;white-space:nowrap;letter-spacing:0.000px;transform:scaleX(0.8587);transform-origin:0.00px 0;">Menuiseries PVC</div>
<div style="position:absolute;left:366.40px;top:199px;line-height:20px;font-size:12px;color:#000;font-weight:normal;font-family:'Liberation Sans', sans-serif;white-space:nowrap;letter-spacing:0.000px;transform:scaleX(0.8750);transform-origin:0.00px 0;">FEN_ALU</div>
<div style="position:absolute;left:707.20px;top:199px;line-height:20px;font-size:12px;color:#000;font-weight:normal;font-family:'Liberation Sans', sans-serif;white-space:nowrap;letter-spacing:0.000px;transform:scaleX(0.8750);transform-origin:0.00px 0;">ALU</div>
<div style="position:absolute;left:812.40px;top:199px;line-height:20px;font-size:12px;color:#000;font-weight:normal;font-family:'Liberation Sans', sans-serif;white-space:nowrap;letter-spacing:0.000px;transform:scaleX(0.8750);transform-origin:0.00px 0;">Menuiseries ALU</div>
<div style="position:absolute;left:366.40px;top:215px;line-height:20px;font-size:12px;color:#000;font-weight:normal;font-family:'Liberation Sans', sans-serif;white-space:nowrap;letter-spacing:0.000px;transform:scaleX(0.8750);transform-origin:0.00px 0;">TGFAB0</div>
<div style="position:absolute;left:643.50px;top:215px;line-height:20px;font-size:12px;color:#000;font-weight:normal;font-family:'Liberation Sans', sans-serif;white-space:nowrap;letter-spacing:0.000px;transform:scaleX(0.9409);transform-origin:0.00px 0;">20/03/2023</div>
<div style="position:absolute;left:708.00px;top:215px;line-height:20px;font-size:12px;color:#000;font-weight:normal;font-family:'Liberation Sans', sans-serif;white-space:nowrap;letter-spacing:0.000px;transform:scaleX(0.8701);transform-origin:0.00px 0;">TestCBN</div>
<div style="position:absolute;left:812.40px;top:215px;line-height:20px;font-size:12px;color:#000;font-weight:normal;font-family:'Liberation Sans', sans-serif;white-space:nowrap;letter-spacing:0.000px;transform:scaleX(0.8750);transform-origin:0.00px 0;">Test CBN</div>
<svg style="position:absolute;left:1003.5px;top:186px" width="13" height="13" viewBox="0 0 13 13"><rect x="0.5" y="0.5" width="12" height="12" fill="#fff" stroke="#333"/><path d="M2.6 6.2 L5.2 8.9 L10.4 3.4" stroke="#333" stroke-width="1.2" fill="none"/></svg>
<svg style="position:absolute;left:1037px;top:186px" width="13" height="13" viewBox="0 0 13 13"><rect x="0.5" y="0.5" width="12" height="12" fill="#fff" stroke="#333"/><path d="M2.6 6.2 L5.2 8.9 L10.4 3.4" stroke="#333" stroke-width="1.2" fill="none"/></svg>
<svg style="position:absolute;left:1003.5px;top:202px" width="13" height="13" viewBox="0 0 13 13"><rect x="0.5" y="0.5" width="12" height="12" fill="#fff" stroke="#333"/><path d="M2.6 6.2 L5.2 8.9 L10.4 3.4" stroke="#333" stroke-width="1.2" fill="none"/></svg>
<svg style="position:absolute;left:1037px;top:202px" width="13" height="13" viewBox="0 0 13 13"><rect x="0.5" y="0.5" width="12" height="12" fill="#fff" stroke="#333"/><path d="M2.6 6.2 L5.2 8.9 L10.4 3.4" stroke="#333" stroke-width="1.2" fill="none"/></svg>
<svg style="position:absolute;left:1003.5px;top:218px" width="13" height="13" viewBox="0 0 13 13"><rect x="0.5" y="0.5" width="12" height="12" fill="#fff" stroke="#333"/><path d="M2.6 6.2 L5.2 8.9 L10.4 3.4" stroke="#333" stroke-width="1.2" fill="none"/></svg>
<svg style="position:absolute;left:1037px;top:218px" width="13" height="13" viewBox="0 0 13 13"><rect x="0.5" y="0.5" width="12" height="12" fill="#fff" stroke="#333"/><path d="M2.6 6.2 L5.2 8.9 L10.4 3.4" stroke="#333" stroke-width="1.2" fill="none"/></svg>
<div style="position:absolute;left:327px;top:543px;width:1px;height:1px;background:#3a78e0"></div>
<div style="position:absolute;left:328px;top:542px;width:1px;height:1px;background:#3a78e0"></div>
<div style="position:absolute;left:326px;top:544px;width:1px;height:1px;background:#b8d0f4"></div>
<div style="position:absolute;left:327px;top:547px;width:1px;height:1px;background:#3a78e0"></div>
<div style="position:absolute;left:328px;top:546px;width:1px;height:1px;background:#3a78e0"></div>
<div style="position:absolute;left:326px;top:548px;width:1px;height:1px;background:#b8d0f4"></div>
<div style="position:absolute;left:327px;top:551px;width:1px;height:1px;background:#3a78e0"></div>
<div style="position:absolute;left:328px;top:550px;width:1px;height:1px;background:#3a78e0"></div>
<div style="position:absolute;left:326px;top:552px;width:1px;height:1px;background:#b8d0f4"></div>
<div style="position:absolute;left:327px;top:555px;width:1px;height:1px;background:#3a78e0"></div>
<div style="position:absolute;left:328px;top:554px;width:1px;height:1px;background:#3a78e0"></div>
<div style="position:absolute;left:326px;top:556px;width:1px;height:1px;background:#b8d0f4"></div>
<div style="position:absolute;left:327px;top:559px;width:1px;height:1px;background:#3a78e0"></div>
<div style="position:absolute;left:328px;top:558px;width:1px;height:1px;background:#3a78e0"></div>
<div style="position:absolute;left:326px;top:560px;width:1px;height:1px;background:#b8d0f4"></div>
<div style="position:absolute;left:404px;top:198px;width:259px;height:289px;border:1px solid #c4c4c4;border-right-color:#a8a8a8;border-bottom-color:#b0b0b0;background:#f0f0f0;box-shadow:2px 2px 1.6px rgba(0,0,0,0.45)"></div>
<div style="position:absolute;left:407px;top:332px;width:254px;height:22px;background:#91c9f7"></div>
<div style="position:absolute;left:435px;top:226px;width:226px;height:1px;background:#d7d7d7"></div>
<div style="position:absolute;left:435px;top:277px;width:226px;height:1px;background:#d7d7d7"></div>
<div style="position:absolute;left:435px;top:328px;width:226px;height:1px;background:#d7d7d7"></div>
<div style="position:absolute;left:435px;top:379px;width:226px;height:1px;background:#d7d7d7"></div>
<div style="position:absolute;left:435px;top:408px;width:226px;height:1px;background:#d7d7d7"></div>
<div style="position:absolute;left:435px;top:437px;width:226px;height:1px;background:#d7d7d7"></div>
<div style="position:absolute;left:439.40px;top:202px;line-height:20px;font-size:11.7px;color:#000;font-weight:normal;font-family:'Liberation Sans', sans-serif;white-space:nowrap;letter-spacing:0.106px;">Actualiser</div>
<div style="position:absolute;left:439.40px;top:231px;line-height:20px;font-size:11.7px;color:#000;font-weight:normal;font-family:'Liberation Sans', sans-serif;white-space:nowrap;letter-spacing:0.179px;">Article Courant</div>
<div style="position:absolute;left:439.40px;top:253px;line-height:20px;font-size:11.7px;color:#000;font-weight:normal;font-family:'Liberation Sans', sans-serif;white-space:nowrap;letter-spacing:0.175px;">Consultation Articles</div>
<div style="position:absolute;left:439.40px;top:282px;line-height:20px;font-size:11.7px;color:#000;font-weight:normal;font-family:'Liberation Sans', sans-serif;white-space:nowrap;letter-spacing:0.007px;">Gestion Article Courant (F1)</div>
<div style="position:absolute;left:439.40px;top:304px;line-height:20px;font-size:11.7px;color:#000;font-weight:normal;font-family:'Liberation Sans', sans-serif;white-space:nowrap;letter-spacing:-0.095px;">Gestion Articles (F3)</div>
<div style="position:absolute;left:439.40px;top:333px;line-height:20px;font-size:11.7px;color:#000;font-weight:normal;font-family:'Liberation Sans', sans-serif;white-space:nowrap;letter-spacing:0.063px;">Consultation Gamme Générique</div>
<div style="position:absolute;left:439.40px;top:355px;line-height:20px;font-size:11.7px;color:#000;font-weight:normal;font-family:'Liberation Sans', sans-serif;white-space:nowrap;letter-spacing:-0.008px;">Consultation Gamme Générée</div>
<div style="position:absolute;left:439.40px;top:384px;line-height:20px;font-size:11.7px;color:#000;font-weight:normal;font-family:'Liberation Sans', sans-serif;white-space:nowrap;letter-spacing:-0.205px;">Variables et Requête</div>
<div style="position:absolute;left:439.40px;top:413px;line-height:20px;font-size:11.7px;color:#8d8d8d;font-weight:normal;font-family:'Liberation Sans', sans-serif;white-space:nowrap;letter-spacing:-0.230px;">Suppression (F6)</div>
<div style="position:absolute;left:439.40px;top:442px;line-height:20px;font-size:11.7px;color:#000;font-weight:normal;font-family:'Liberation Sans', sans-serif;white-space:nowrap;letter-spacing:-0.024px;">Définition Filtres et Tris</div>
<div style="position:absolute;left:439.40px;top:464px;line-height:20px;font-size:11.7px;color:#000;font-weight:normal;font-family:'Liberation Sans', sans-serif;white-space:nowrap;letter-spacing:0.100px;">Condition par Défaut (Ctrl-F5)</div>
<svg style="position:absolute;left:577px;top:347px" width="13" height="20" viewBox="0 0 13 20"><path d="M0.5 0.5 V16 L4.2 12.5 L6.8 18.5 L9 17.5 L6.5 11.6 H11.5 Z" fill="#fff" stroke="#000" stroke-width="1" stroke-linejoin="miter"/></svg>
</body></html>
